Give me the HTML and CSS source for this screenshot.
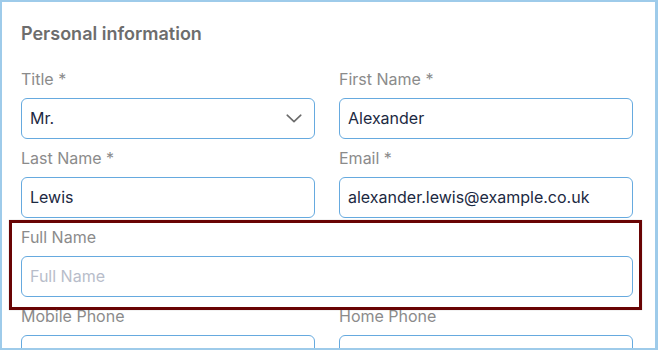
FILE: index.html
```html
<!DOCTYPE html>
<html lang="en">
<head>
<meta charset="utf-8">
<title>Personal information</title>
<link rel="stylesheet" href="styles.css">
</head>
<body>
<div class="frame">
  <h2 class="heading">Personal information</h2>
  <div class="grid">
    <div class="field">
      <label class="label">Title *</label>
      <div class="input select">
        <span>Mr.</span>
        <svg class="chevron" width="16" height="9" viewBox="0 0 16 9"><path d="M1.2 1.2 L8 7.6 L14.8 1.2" fill="none" stroke="#6b6b6b" stroke-width="1.6" stroke-linecap="round" stroke-linejoin="round"/></svg>
      </div>
    </div>
    <div class="field">
      <label class="label">First Name *</label>
      <div class="input">Alexander</div>
    </div>
    <div class="field">
      <label class="label">Last Name *</label>
      <div class="input">Lewis</div>
    </div>
    <div class="field">
      <label class="label">Email *</label>
      <div class="input">alexander.lewis@example.co.uk</div>
    </div>
    <div class="field full highlight">
      <label class="label">Full Name</label>
      <div class="input placeholder">Full Name</div>
    </div>
    <div class="field">
      <label class="label">Mobile Phone</label>
      <div class="input"></div>
    </div>
    <div class="field">
      <label class="label">Home Phone</label>
      <div class="input"></div>
    </div>
  </div>
</div>
</body>
</html>
```

FILE: styles.css
```css
* { box-sizing: border-box; }
html, body { margin: 0; padding: 0; background: #ffffff; }
body {
  font-family: Inter, "Noto Sans", "Liberation Sans", sans-serif;
  width: 658px;
  height: 350px;
  overflow: hidden;
}
.frame {
  width: 658px;
  height: 350px;
  border: 2px solid #9ecbea;
  border-right-width: 3px;
  padding: 20px 22px 0 19px;
  overflow: hidden;
  background: #fff;
}
.heading {
  margin: 0 0 22.5px 0;
  font-size: 18px;
  line-height: 24px;
  font-weight: 600;
  color: #6d6d6d;
}
.grid {
  display: grid;
  grid-template-columns: 1fr 1fr;
  column-gap: 24px;
  row-gap: 9px;
}
.field { display: flex; flex-direction: column; position: relative; }
.full { grid-column: 1 / -1; }
.label {
  font-size: 16px;
  line-height: 20px;
  color: #8b8b8b;
  margin-bottom: 9px;
}
.input {
  height: 41px;
  border: 1px solid #66aadf;
  border-radius: 6px;
  padding: 0 8px;
  display: flex;
  align-items: center;
  font-size: 16px;
  color: #1c2942;
}
.select { justify-content: space-between; padding-right: 12px; }
.placeholder { color: #b8bdca; }
.highlight::after {
  content: "";
  position: absolute;
  top: -7px;
  left: -12px;
  right: -9px;
  bottom: -13px;
  border: 3px solid #690404;
  box-shadow: 0 0 1px rgba(0,0,0,0.3);
  pointer-events: none;
}
```
